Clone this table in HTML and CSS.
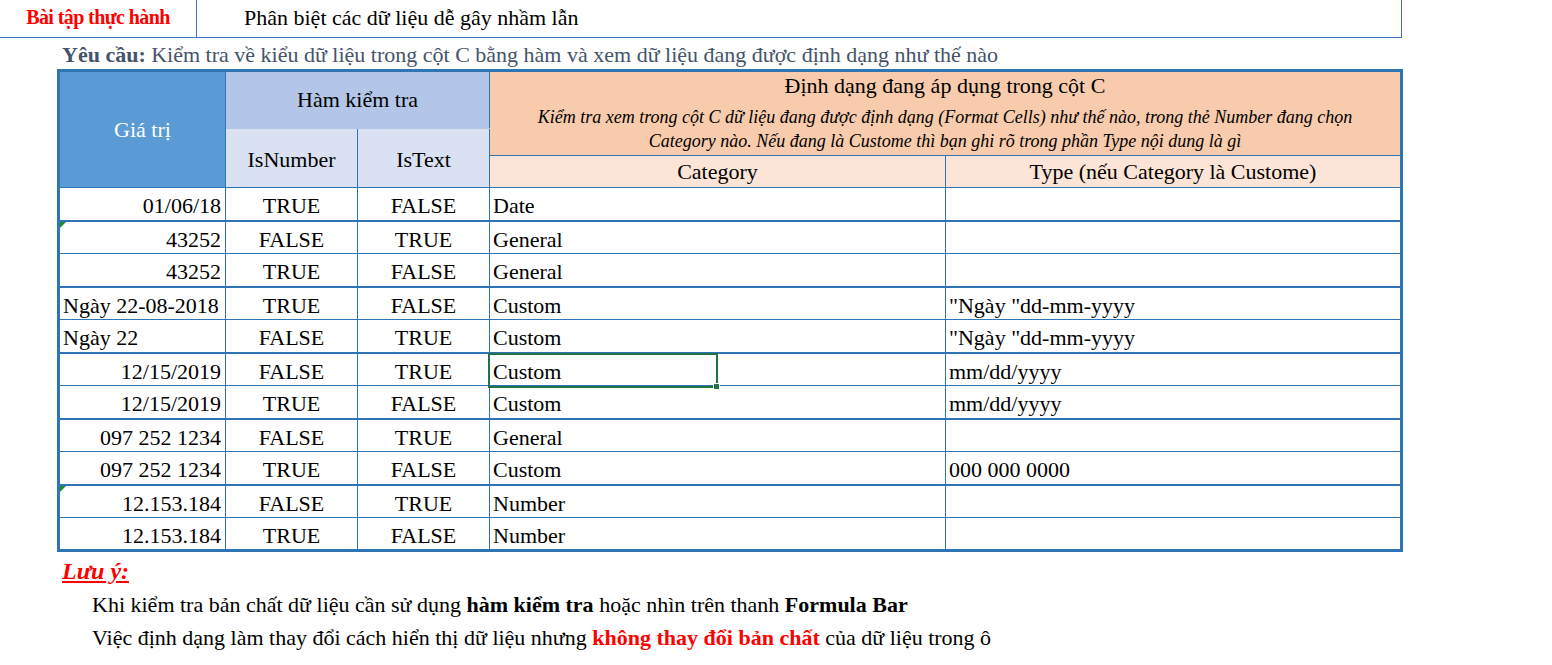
FILE: index.html
```html
<!DOCTYPE html>
<html lang="vi">
<head>
<meta charset="utf-8">
<title>Bài tập thực hành</title>
<link rel="stylesheet" href="styles.css">
</head>
<body>
<div class="banner">
  <div class="banner-label">Bài tập thực hành</div>
  <div class="banner-title">Phân biệt các dữ liệu dễ gây nhầm lẫn</div>
</div>
<div class="req"><b>Yêu cầu:</b> Kiểm tra về kiểu dữ liệu trong cột C bằng hàm và xem dữ liệu đang được định dạng như thế nào</div>
<table class="sheet">
  <colgroup>
    <col class="c-a"><col class="c-b"><col class="c-c"><col class="c-d"><col class="c-e">
  </colgroup>
  <thead>
    <tr class="h1">
      <th rowspan="3" class="h-value">Giá trị</th>
      <th colspan="2" class="h-func">Hàm kiểm tra</th>
      <th colspan="2" rowspan="2" class="h-fmt">
        <div class="fmt-title">Định dạng đang áp dụng trong cột C</div>
        <div class="fmt-note">Kiểm tra xem trong cột C dữ liệu đang được định dạng (Format Cells) như thế nào, trong thẻ Number đang chọn<br>Category nào. Nếu đang là Custome thì bạn ghi rõ trong phần Type nội dung là gì</div>
      </th>
    </tr>
    <tr class="h2">
      <th rowspan="2" class="h-sub">IsNumber</th>
      <th rowspan="2" class="h-sub">IsText</th>
    </tr>
    <tr class="h3">
      <th class="h-cat">Category</th>
      <th class="h-cat">Type (nếu Category là Custome)</th>
    </tr>
  </thead>
  <tbody>
    <tr class="thick"><td class="num">01/06/18</td><td>TRUE</td><td>FALSE</td><td class="txt">Date</td><td class="txt"></td></tr>
    <tr><td class="num flag">43252</td><td>FALSE</td><td>TRUE</td><td class="txt">General</td><td class="txt"></td></tr>
    <tr class="thick"><td class="num">43252</td><td>TRUE</td><td>FALSE</td><td class="txt">General</td><td class="txt"></td></tr>
    <tr><td class="lt">Ngày 22-08-2018</td><td>TRUE</td><td>FALSE</td><td class="txt">Custom</td><td class="txt">"Ngày "dd-mm-yyyy</td></tr>
    <tr class="thick"><td class="lt">Ngày 22</td><td>FALSE</td><td>TRUE</td><td class="txt">Custom</td><td class="txt">"Ngày "dd-mm-yyyy</td></tr>
    <tr><td class="num">12/15/2019</td><td>FALSE</td><td>TRUE</td><td class="txt sel-cell">Custom<span class="sel"><span class="handle"></span></span></td><td class="txt">mm/dd/yyyy</td></tr>
    <tr class="thick"><td class="num">12/15/2019</td><td>TRUE</td><td>FALSE</td><td class="txt">Custom</td><td class="txt">mm/dd/yyyy</td></tr>
    <tr><td class="num">097 252 1234</td><td>FALSE</td><td>TRUE</td><td class="txt">General</td><td class="txt"></td></tr>
    <tr class="thick"><td class="num">097 252 1234</td><td>TRUE</td><td>FALSE</td><td class="txt">Custom</td><td class="txt">000 000 0000</td></tr>
    <tr><td class="num flag">12.153.184</td><td>FALSE</td><td>TRUE</td><td class="txt">Number</td><td class="txt"></td></tr>
    <tr class="thick"><td class="num">12.153.184</td><td>TRUE</td><td>FALSE</td><td class="txt">Number</td><td class="txt"></td></tr>
  </tbody>
</table>
<div class="notes">
  <div class="note-head">Lưu ý:</div>
  <p class="note first">Khi kiểm tra bản chất dữ liệu cần sử dụng <b>hàm kiểm tra</b> hoặc nhìn trên thanh <b>Formula Bar</b></p>
  <p class="note">Việc định dạng làm thay đổi cách hiển thị dữ liệu nhưng <b class="red">không thay đổi bản chất</b> của dữ liệu trong ô</p>
</div>
</body>
</html>
```
FILE: styles.css
```css
html, body {
  margin: 0;
  padding: 0;
  background: #ffffff;
}
body {
  font-family: "Liberation Serif", "Times New Roman", serif;
  font-size: 22px;
  color: #000000;
}
.banner {
  display: flex;
  width: 1401px;
  height: 37px;
  border-bottom: 1px solid #4472c4;
  border-right: 1px solid #4472c4;
  box-sizing: content-box;
}
.banner-label {
  width: 196px;
  border-right: 1px solid #4472c4;
  color: #ff0000;
  font-weight: bold;
  text-align: center;
  line-height: 35px;
  font-size: 20px;
  letter-spacing: -0.6px;
}
.banner-title {
  padding-left: 47px;
  line-height: 35px;
  font-size: 22px;
}
.req {
  height: 31px;
  line-height: 34px;
  padding-left: 62px;
  color: #44546a;
  font-size: 22px;
}
.sheet {
  margin-left: 57px;
  border-collapse: collapse;
  border: 3px solid #2e75b6;
  table-layout: fixed;
  width: 1346px;
}
.c-a { width: 167px; }
.c-b { width: 132px; }
.c-c { width: 132px; }
.c-d { width: 456px; }
.c-e { width: 456px; }
.sheet th {
  font-weight: normal;
  border: 1px solid #2e75b6;
  padding: 0;
  text-align: center;
  vertical-align: middle;
}
.h1 { height: 58px; }
.h2 { height: 27px; }
.h3 { height: 32px; }
.h-value {
  background: #5b9bd5;
  color: #ffffff;
  border-bottom: 2px solid #2e75b6;
  padding-top: 2px;
}
.h-func {
  background: #b4c6e7;
  border-bottom-color: #b4c6e7 !important;
  padding-top: 2px;
}
.h-sub {
  background: #d9e1f2;
  border-bottom: 2px solid #2e75b6;
  padding-top: 4px !important;
}
.h-fmt {
  background: #f8cbad;
}
.fmt-title {
  font-size: 22px;
  line-height: 24px;
  margin-top: 0px;
}
.fmt-note {
  font-style: italic;
  font-size: 18px;
  line-height: 24px;
  margin-top: 7px;
}
.h-cat {
  background: #fce4d6;
  border-bottom: 2px solid #2e75b6;
  padding-top: 1px !important;
}
.sheet tbody tr { height: 33px; }
.sheet td {
  border: 1px solid #2e75b6;
  padding: 5px 0 0 0;
  text-align: center;
  line-height: 26px;
  white-space: nowrap;
  overflow: visible;
}
.sheet tr.thick td { border-bottom-width: 2px; }
.sheet td.num {
  text-align: right;
  padding-right: 4px;
}
.sheet td.lt {
  text-align: left;
  padding-left: 3px;
}
.sheet td.txt {
  text-align: left;
  padding-left: 3px;
}
.sheet td.flag { position: relative; }
.sheet td.flag::before {
  content: "";
  position: absolute;
  left: 0;
  top: 0;
  border-top: 6px solid #1e8c34;
  border-right: 6px solid transparent;
}
.sel-cell { position: relative; }
.sel {
  position: absolute;
  left: -2px;
  top: -1px;
  width: 226px;
  height: 31px;
  border: 2px solid #217346;
}
.handle {
  position: absolute;
  right: -4px;
  bottom: -4px;
  width: 5px;
  height: 5px;
  background: #217346;
  border: 1px solid #ffffff;
}
.notes {
  padding-top: 4px;
}
.note-head {
  margin-left: 62px;
  color: #ff0000;
  font-weight: bold;
  font-style: italic;
  text-decoration: underline;
  font-size: 24px;
  line-height: 30px;
}
.note {
  margin: 0 0 0 92px;
  font-size: 22px;
  line-height: 33px;
}
.note.first {
  margin-top: 2px;
}
.red { color: #ff0000; }
```
